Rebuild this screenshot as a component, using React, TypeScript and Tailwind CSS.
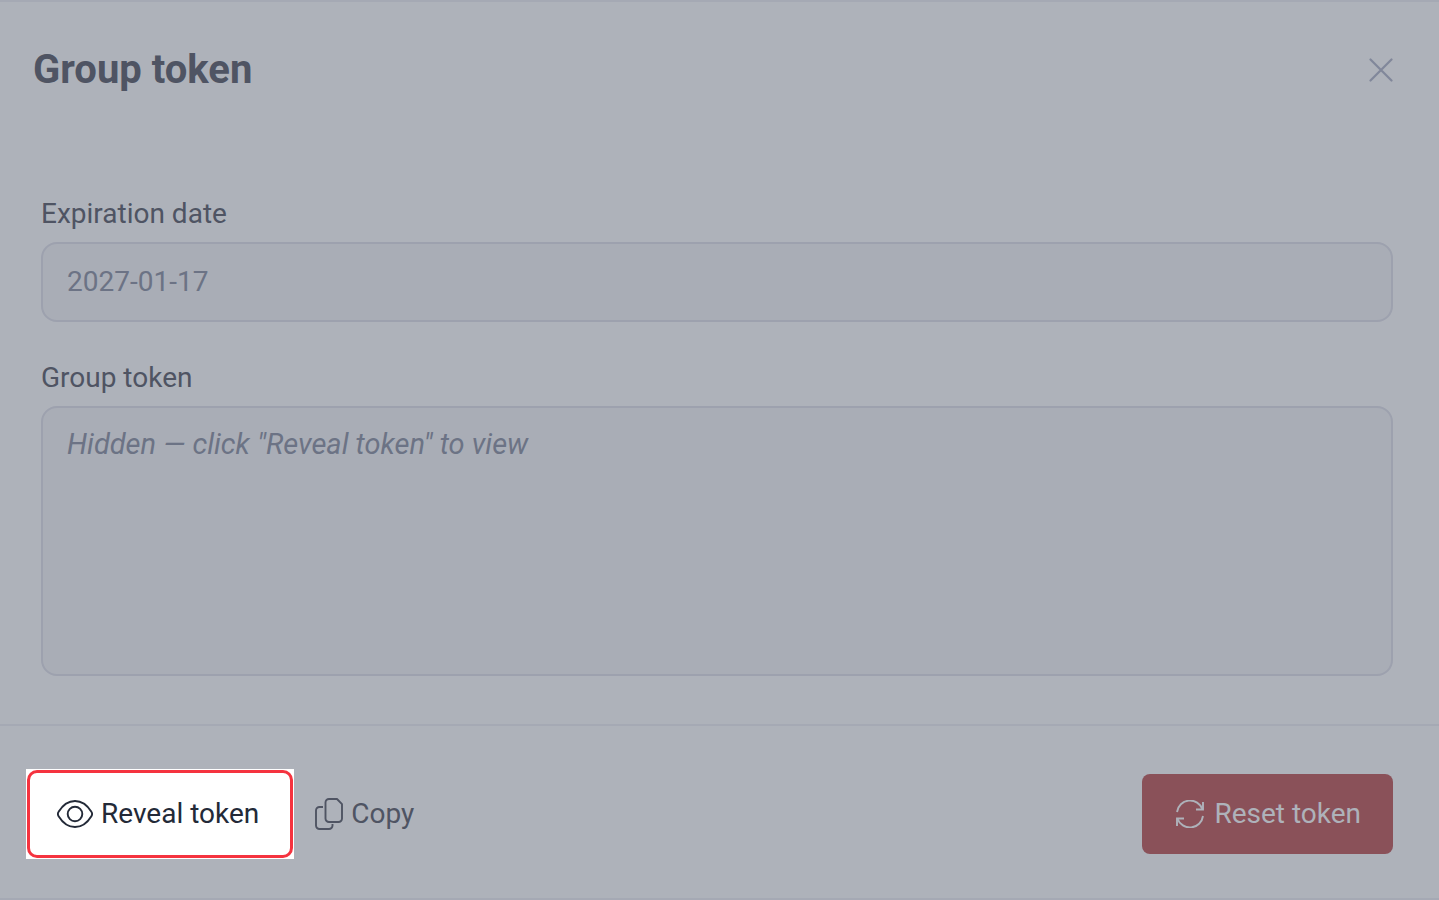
import React from 'react';

function CloseIcon() {
  return (
    <svg className="w-6 h-6" viewBox="0 0 24 24" fill="none" stroke="currentColor" strokeWidth="2.200" strokeLinecap="round" aria-hidden="true">
      <path d="M1.5 1.5l21 21M22.5 1.5l-21 21" />
    </svg>
  );
}

function EyeIcon() {
  return (
    <svg className="w-9 h-8" viewBox="0 0 36 32" fill="none" stroke="currentColor" strokeWidth="1.900" strokeLinejoin="round" aria-hidden="true">
      <path d="M18 3C11 3 5.500 7.500 1.600 13.800a4 4 0 0 0 0 4.400C5.500 24.500 11 29 18 29s12.500-4.500 16.400-10.800a4 4 0 0 0 0-4.400C30.500 7.500 25 3 18 3Z" />
      <circle cx="18" cy="16" r="7.300" />
    </svg>
  );
}

function CopyIcon() {
  return (
    <svg className="w-7 h-8" viewBox="0 0 28 32" fill="none" stroke="currentColor" strokeWidth="1.900" strokeLinejoin="round" aria-hidden="true">
      <path d="M14 1h8L27 6.200V20.500a3.500 3.500 0 0 1-3.500 3.500h-9.500a3.500 3.500 0 0 1-3.500-3.500V4.500A3.500 3.500 0 0 1 14 1Z" />
      <path d="M8 9H4.500A3.500 3.500 0 0 0 1 12.500v15A3.500 3.500 0 0 0 4.500 31h9.500a3.500 3.500 0 0 0 3.500-3.500V26" />
    </svg>
  );
}

function ResetIcon() {
  return (
    <svg className="w-7 h-7" viewBox="0 0 28 28" fill="none" stroke="currentColor" strokeWidth="1.900" aria-hidden="true">
      <path d="M1 12A13.200 13.200 0 0 1 26.500 9.300" />
      <path d="M27 2v7.500h-7" />
      <path d="M27 16A13.200 13.200 0 0 1 1.500 18.700" />
      <path d="M1 26v-7.500h7" />
    </svg>
  );
}

function App() {
  return (
    <div className="min-h-screen flex flex-col bg-[#aeb2ba] border-y-2 border-[#a5a9b4] font-['Roboto',sans-serif] text-[28px] leading-8 text-[#4f5463]">
      <header className="flex items-center justify-between pl-[33px] pr-[46px] pt-11">
        <h1 className="text-[40px] leading-12 font-bold">Group token</h1>
        <button type="button" aria-label="Close" className="text-[#81879a]">
          <CloseIcon />
        </button>
      </header>

      <main className="flex-1 flex flex-col pl-[41px] pr-[46px] pt-26 pb-12">
        <label htmlFor="expiration">Expiration date</label>
        <input
          id="expiration"
          type="text"
          readOnly
          defaultValue="2027-01-17"
          className="w-full h-20 mt-3 mb-10 px-6 pb-0.5 rounded-2xl border-2 border-[#9da1ae] bg-[#a9adb6] text-[#6c7385] outline-none"
        />
        <label htmlFor="token">Group token</label>
        <textarea
          id="token"
          readOnly
          placeholder={'Hidden — click "Reveal token" to view'}
          className="w-full flex-1 mt-3 px-6 py-5 rounded-2xl border-2 border-[#9da1ae] bg-[#a9adb6] text-[29px] italic placeholder:text-[#6c7385] resize-none outline-none"
        />
      </main>

      <footer className="flex items-center justify-between border-t-2 border-[#a5a9b4] pl-[26px] pr-[46px] pt-[43px] pb-[39px]">
        <div className="flex items-center gap-[21px]">
          <div className="bg-white p-px">
            <button type="button" className="flex items-center gap-2 h-22 pl-[27px] pr-[31px] rounded-[10px] border-3 border-[#f5333f] text-[#232a38]">
              <EyeIcon />
              Reveal token
            </button>
          </div>
          <button type="button" className="flex items-center gap-2">
            <CopyIcon />
            Copy
          </button>
        </div>
        <button type="button" className="flex items-center gap-[10px] h-20 pl-[34px] pr-8 rounded-lg bg-[#8a5159] text-[#aeb2ba]">
          <ResetIcon />
          Reset token
        </button>
      </footer>
    </div>
  );
}

export default App;
